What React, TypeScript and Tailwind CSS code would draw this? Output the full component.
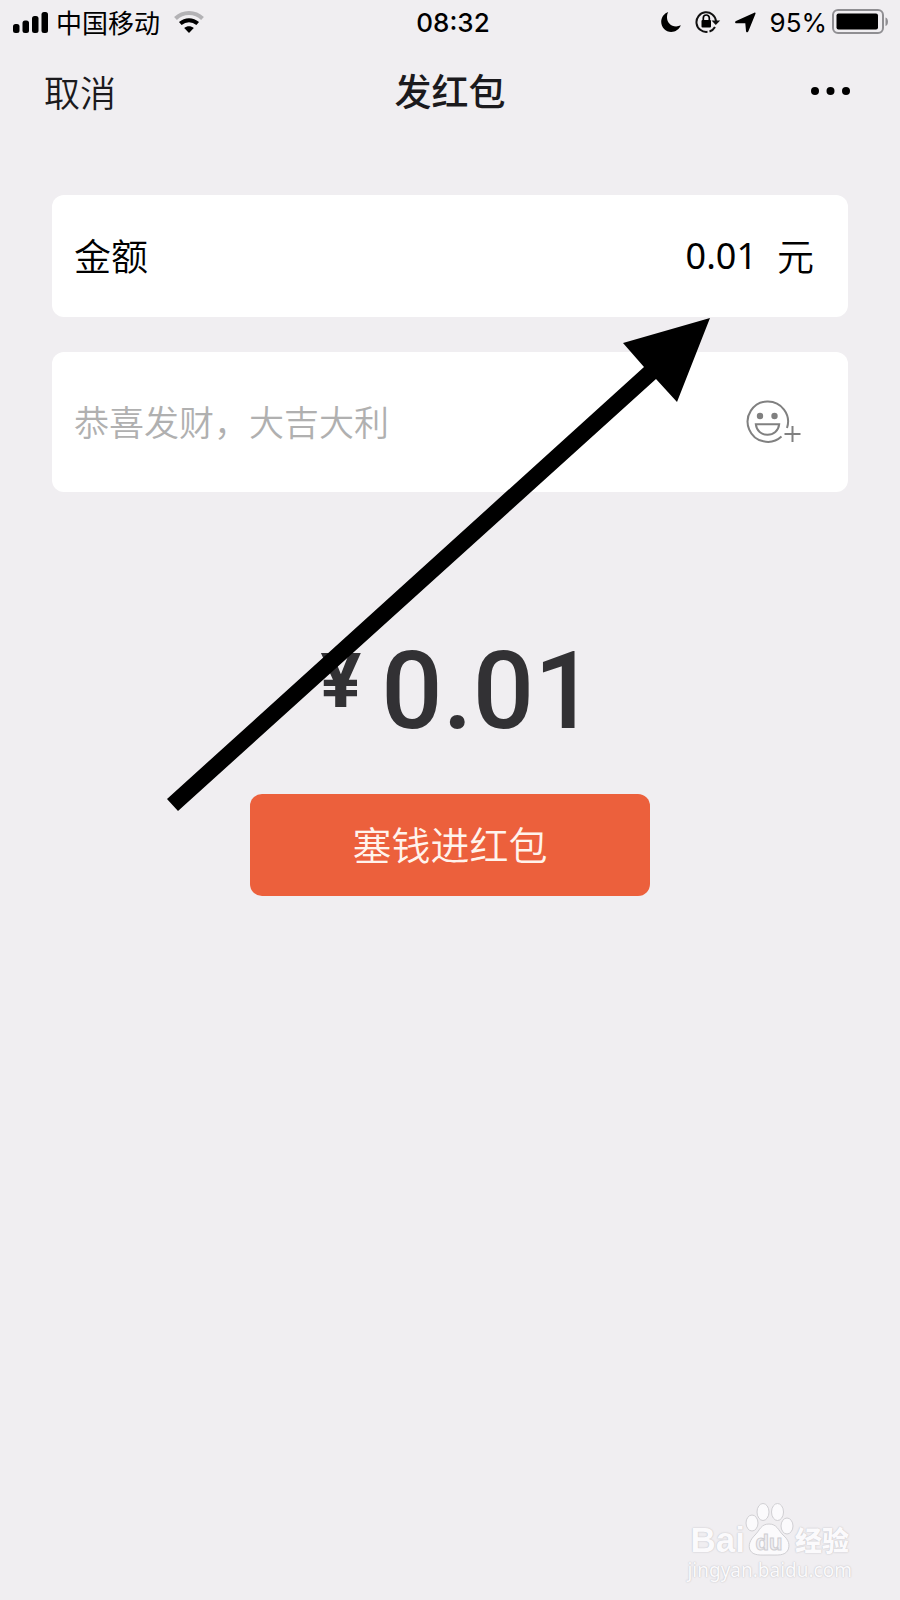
import { useState } from "react";

function SignalIcon() {
	return (
		<svg width="36" height="24" viewBox="0 0 36 24" aria-hidden="true">
			<rect x="1" y="14" width="6.5" height="9" rx="2.5" />
			<rect x="10.5" y="10.5" width="6.5" height="12.5" rx="2.5" />
			<rect x="20" y="6" width="6.5" height="17" rx="2.5" />
			<rect x="29.5" y="2" width="6.5" height="21" rx="2.5" />
		</svg>
	);
}

function WifiIcon() {
	return (
		<svg width="30" height="24" viewBox="0 0 30 24" fill="none" aria-hidden="true">
			<path d="M1.5 8.5C9 1.2 21 1.2 28.5 8.5" stroke="#b3b2b5" strokeWidth="4" />
			<path d="M6.3 13.6C11.5 9 18.5 9 23.7 13.6" stroke="#000" strokeWidth="4" />
			<path d="M10.2 18C13 15.6 17 15.6 19.8 18L15 23Z" fill="#000" />
		</svg>
	);
}

function MoonIcon() {
	return (
		<svg width="20" height="22" viewBox="0 0 20 22" aria-hidden="true">
			<path d="M7.2 1C2.9 2.6 0.2 6.4 0.2 10.8C0.2 16.6 4.7 21 10.2 21C14.5 21 18.2 18.3 19.8 14.3C18.3 15.1 16.7 15.4 15.1 15.4C9.9 15.4 6 11.5 6 6.5C6 4.5 6.3 2.6 7.2 1Z" />
		</svg>
	);
}

function RotationLockIcon() {
	return (
		<svg width="26" height="24" viewBox="0 0 26 24" fill="none" aria-hidden="true">
			<path
				d="M21 11A9.8 9.8 0 1 0 12.5 21.8"
				stroke="#111"
				strokeWidth="2"
			/>
			<path d="M14.5 21.5A9.8 9.8 0 0 0 20 17" stroke="#111" strokeWidth="2" />
			<path d="M16.5 10.5H25.2L20.8 15Z" fill="#111" />
			<rect x="6.5" y="10" width="9.5" height="7.5" rx="1" fill="#000" />
			<path d="M8.3 11V8A3 3 0 0 1 14.3 8V11" stroke="#000" strokeWidth="1.7" />
		</svg>
	);
}

function LocationIcon() {
	return (
		<svg width="21" height="21" viewBox="0 0 21 21" aria-hidden="true">
			<path d="M19.3 0.7C20.5 0.4 20.8 0.8 20.4 1.9L13.5 19C12.8 20.8 11.2 20.7 11 19L10.3 11.3L1.5 11.2C-0.2 11.1 -0.3 9.6 1 8.9Z" />
		</svg>
	);
}

function BatteryIcon() {
	return (
		<svg width="57" height="26" viewBox="0 0 57 26" aria-hidden="true">
			<rect x="2" y="1" width="50" height="23" rx="5" fill="none" stroke="#8f8e92" strokeWidth="2" />
			<rect x="5.5" y="4.5" width="41.5" height="16" rx="2" />
			<path d="M54.5 8.5C57.8 9.5 57.8 16 54.5 17Z" fill="#8f8e92" />
		</svg>
	);
}

function EmojiAddIcon() {
	return (
		<svg
			width="56"
			height="44"
			viewBox="0 0 56 44"
			fill="none"
			stroke="#808080"
			strokeWidth="2"
			aria-hidden="true"
		>
			<path d="M41 28A20.2 20.2 0 1 0 35.5 36.5" />
			<circle cx="14" cy="16" r="3.2" fill="#808080" stroke="none" />
			<circle cx="28.5" cy="16" r="3.2" fill="#808080" stroke="none" />
			<path d="M9.8 24.2H33.2C32.5 31 27.5 34.8 21.5 34.8S10.5 31 9.8 24.2Z" />
			<path d="M46.5 26V42M38.5 34H54.5" />
		</svg>
	);
}

function StatusBar() {
	return (
		<div className="grid h-11 grid-cols-[1fr_auto_1fr] items-center px-3 text-[26px] leading-8">
			<div className="flex items-center">
				<SignalIcon />
				<span className="ml-2">中国移动</span>
				<span className="ml-3.5">
					<WifiIcon />
				</span>
			</div>
			<time className="ml-1.5 pt-0.5 font-['Inter'] font-medium">08:32</time>
			<div className="flex items-center justify-end">
				<MoonIcon />
				<span className="ml-3.5">
					<RotationLockIcon />
				</span>
				<span className="ml-3.5">
					<LocationIcon />
				</span>
				<span className="ml-3.5 pt-0.5 font-['Inter']">95%</span>
				<span className="ml-1">
					<BatteryIcon />
				</span>
			</div>
		</div>
	);
}

function NavBar() {
	return (
		<header className="grid h-[94px] grid-cols-[1fr_auto_1fr] items-center px-11 text-[36px] text-[#1b1a1d]">
			<button type="button" className="justify-self-start font-[350]">
				取消
			</button>
			<h1 className="text-[37px] font-medium">发红包</h1>
			<button type="button" aria-label="更多" className="justify-self-end">
				<svg width="50" height="12" viewBox="0 0 50 12" aria-hidden="true">
					<circle cx="9" cy="6" r="4" />
					<circle cx="24.5" cy="6" r="4" />
					<circle cx="40" cy="6" r="4" />
				</svg>
			</button>
		</header>
	);
}

// Hand-drawn pointer from the total up to the amount field
function PointerArrow() {
	return (
		<svg
			className="pointer-events-none absolute top-[317px] left-[166px]"
			width="546"
			height="496"
			viewBox="166 317 546 496"
			aria-hidden="true"
		>
			<path d="M167 799L644 367L623 343L710 318L677 402L656 379L178 811Z" />
		</svg>
	);
}

function Watermark() {
	return (
		<footer className="mt-auto mr-12 mb-4.5 self-end text-[#fbfafc] [text-shadow:0_0_1px_#c4c3c7,0_0_2px_#cfced2]">
			<div className="flex h-14 items-end justify-center leading-9">
				<span className="font-['Liberation_Sans'] text-[35px] font-bold">Bai</span>
				<svg width="50" height="56" viewBox="0 0 50 56" aria-hidden="true">
					<g fill="#fbfafc" stroke="#d0cfd3" strokeWidth="1">
						<ellipse cx="7" cy="21" rx="6" ry="8" />
						<ellipse cx="18" cy="10" rx="6" ry="8.5" />
						<ellipse cx="32.5" cy="10" rx="6" ry="8.5" />
						<ellipse cx="42" cy="24" rx="6" ry="8" />
						<path d="M24 22C32 22 33 28 38 33C44 38 45 43 43 48C40 54 32 53 24 53C16 53 8 54 5 48C3 43 5 38 10 33C15 28 16 22 24 22Z" />
					</g>
					<text
						x="24"
						y="48"
						textAnchor="middle"
						fill="#f0eff2"
						stroke="#cfced2"
						strokeWidth="1"
						className="font-['Liberation_Sans'] text-[22px] font-bold [text-shadow:none]"
					>
						du
					</text>
				</svg>
				<span className="text-[27px] font-black">经验</span>
			</div>
			<p className="font-['Noto_Sans'] text-[19px] leading-6">jingyan.baidu.com</p>
		</footer>
	);
}

export default function App() {
	const [amount, setAmount] = useState("0.01");
	const [message, setMessage] = useState("");

	return (
		<div
			lang="zh-CN"
			className="relative flex min-h-screen flex-col bg-[#f0eef1] font-['Noto_Sans_CJK_SC',sans-serif] text-black"
		>
			<StatusBar />
			<NavBar />
			<form
				className="flex flex-col px-[52px] pt-[57px]"
				onSubmit={(e) => e.preventDefault()}
			>
				<div className="flex h-[122px] items-center rounded-xl bg-white pr-[34px] pl-[22px] text-[37px] font-[350]">
					<label htmlFor="amount">金额</label>
					<input
						id="amount"
						inputMode="decimal"
						value={amount}
						onChange={(e) => setAmount(e.target.value)}
						className="ml-6 min-w-0 flex-1 bg-transparent text-right font-['Noto_Sans'] text-[36px] font-normal outline-none"
					/>
					<span className="ml-5">元</span>
				</div>
				<div className="mt-[35px] flex h-[140px] items-center rounded-xl bg-white pr-[46px] pl-[22px] text-[35px]">
					<input
						aria-label="祝福语"
						value={message}
						onChange={(e) => setMessage(e.target.value)}
						placeholder="恭喜发财，大吉大利"
						className="min-w-0 flex-1 bg-transparent pb-0.5 font-[350] outline-none placeholder:text-[#b0b0b0]"
					/>
					<button type="button" aria-label="添加表情">
						<EmojiAddIcon />
					</button>
				</div>
				<p className="mt-36 flex h-[110px] items-start justify-center pl-4 font-['Roboto'] text-[#323134]">
					<span className="text-[76px] leading-[90px] font-bold">¥</span>
					<span className="ml-5 text-[108px] leading-[110px] font-medium">
						{amount || "0.00"}
					</span>
				</p>
				<button
					type="submit"
					className="mt-12 h-[102px] w-[400px] self-center rounded-xl bg-[#ec603c] pb-1 text-[39px] font-[350] text-[#fff3ec]"
				>
					塞钱进红包
				</button>
			</form>
			<Watermark />
			<PointerArrow />
		</div>
	);
}
